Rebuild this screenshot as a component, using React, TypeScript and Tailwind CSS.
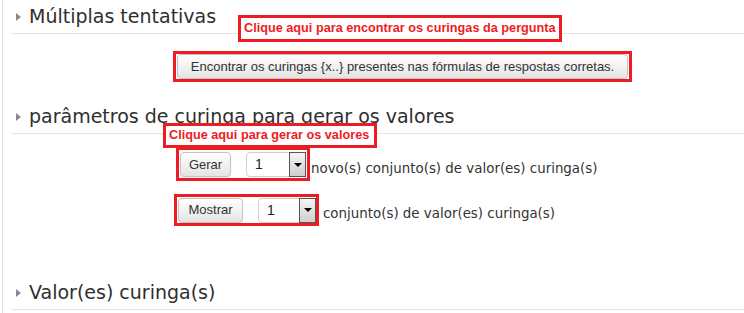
import type { ReactNode } from 'react';

function Heading({ children, className = '' }: { children: ReactNode; className?: string }) {
  return (
    <div className={`box-border flex h-[34px] items-start border-b border-[#e5e5e5] pt-[4px] ${className}`}>
      <span className="mt-[9px] ml-[5px] h-0 w-0 border-y-[4px] border-l-[5px] border-y-transparent border-l-[#8a8a8a]" />
      <h3 className="ml-[8px] font-['DejaVu_Sans',Verdana,sans-serif] text-[19px] leading-[24px] font-normal text-[#2f2f2f]">
        {children}
      </h3>
    </div>
  );
}

function MoodleButton({ children, className = '' }: { children: ReactNode; className?: string }) {
  return (
    <button
      className={`box-border flex h-[25px] items-center justify-center rounded-[4px] border border-[#c4c4c4] bg-gradient-to-b from-white to-[#e4e4e4] font-['Liberation_Sans',Arial,sans-serif] text-[13px] text-[#333] shadow-[0_1px_1px_rgba(0,0,0,0.08)] ${className}`}
    >
      {children}
    </button>
  );
}

function Select({ className = '' }: { className?: string }) {
  return (
    <div className={`box-border flex h-[25px] items-center justify-between rounded-[4px] border border-[#cfcfcf] bg-white ${className}`}>
      <span className="pl-[8px] font-['Liberation_Sans',Arial,sans-serif] text-[14px] text-[#222]">1</span>
      <span className="box-border flex h-[25px] w-[17px] -mr-px items-center justify-center border border-[#555] bg-gradient-to-b from-[#f4f4f4] to-[#cfcfcf]">
        <span className="h-0 w-0 border-x-[4px] border-t-[4px] border-x-transparent border-t-black" />
      </span>
    </div>
  );
}

function Note({ children, className = '' }: { children: ReactNode; className?: string }) {
  return (
    <div
      className={`absolute box-border flex items-center whitespace-nowrap border-[3px] border-[#ed1c24] bg-white pl-[3px] font-['Liberation_Sans_Narrow','Liberation_Sans',sans-serif] text-[12.7px] font-bold text-[#ed1c24] ${className}`}
    >
      {children}
    </div>
  );
}

export default function App() {
  const label = "font-['DejaVu_Sans',Verdana,sans-serif] text-[13.4px] text-[#333]";

  return (
    <div className="relative h-[313px] w-[744px] overflow-hidden bg-white pl-[2px]">
      <div className="h-full border-l border-[#e3e3e3]">
        <div className="ml-[8px]">
          <Heading>Múltiplas tentativas</Heading>
          <div className="mt-[17px] pl-[162px]">
            <div className="inline-flex border-[3px] border-[#ed1c24] px-px">
              <MoodleButton className="w-[451px]">
                Encontrar os curingas {'{x..}'} presentes nas fórmulas de respostas corretas.
              </MoodleButton>
            </div>
          </div>

          <Heading className="mt-[18px]">parâmetros de curinga para gerar os valores</Heading>

          <div className="mt-[13px] flex items-center pl-[165px]">
            <div className="box-border flex h-[34px] items-center gap-[15px] border-[3px] border-[#ed1c24] px-px pt-px">
              <MoodleButton className="w-[51px]">Gerar</MoodleButton>
              <Select className="w-[60px]" />
            </div>
            <span className={`ml-px mt-[10px] ${label}`}>novo(s) conjunto(s) de valor(es) curinga(s)</span>
          </div>

          <div className="mt-[13px] flex items-center pl-[163px]">
            <div className="box-border flex h-[32px] items-center gap-[15px] border-[3px] border-[#ed1c24] pl-px">
              <MoodleButton className="w-[65px]">Mostrar</MoodleButton>
              <Select className="w-[58px]" />
            </div>
            <span className={`ml-[4px] mt-[8px] ${label}`}>conjunto(s) de valor(es) curinga(s)</span>
          </div>

          <Heading className="mt-[50px]">Valor(es) curinga(s)</Heading>
        </div>
      </div>

      <Note className="left-[238px] top-[15px] h-[27px] w-[324px]">
        Clique aqui para encontrar os curingas da pergunta
      </Note>
      <Note className="left-[163px] top-[123px] h-[25px] w-[214px]">Clique aqui para gerar os valores</Note>
    </div>
  );
}
